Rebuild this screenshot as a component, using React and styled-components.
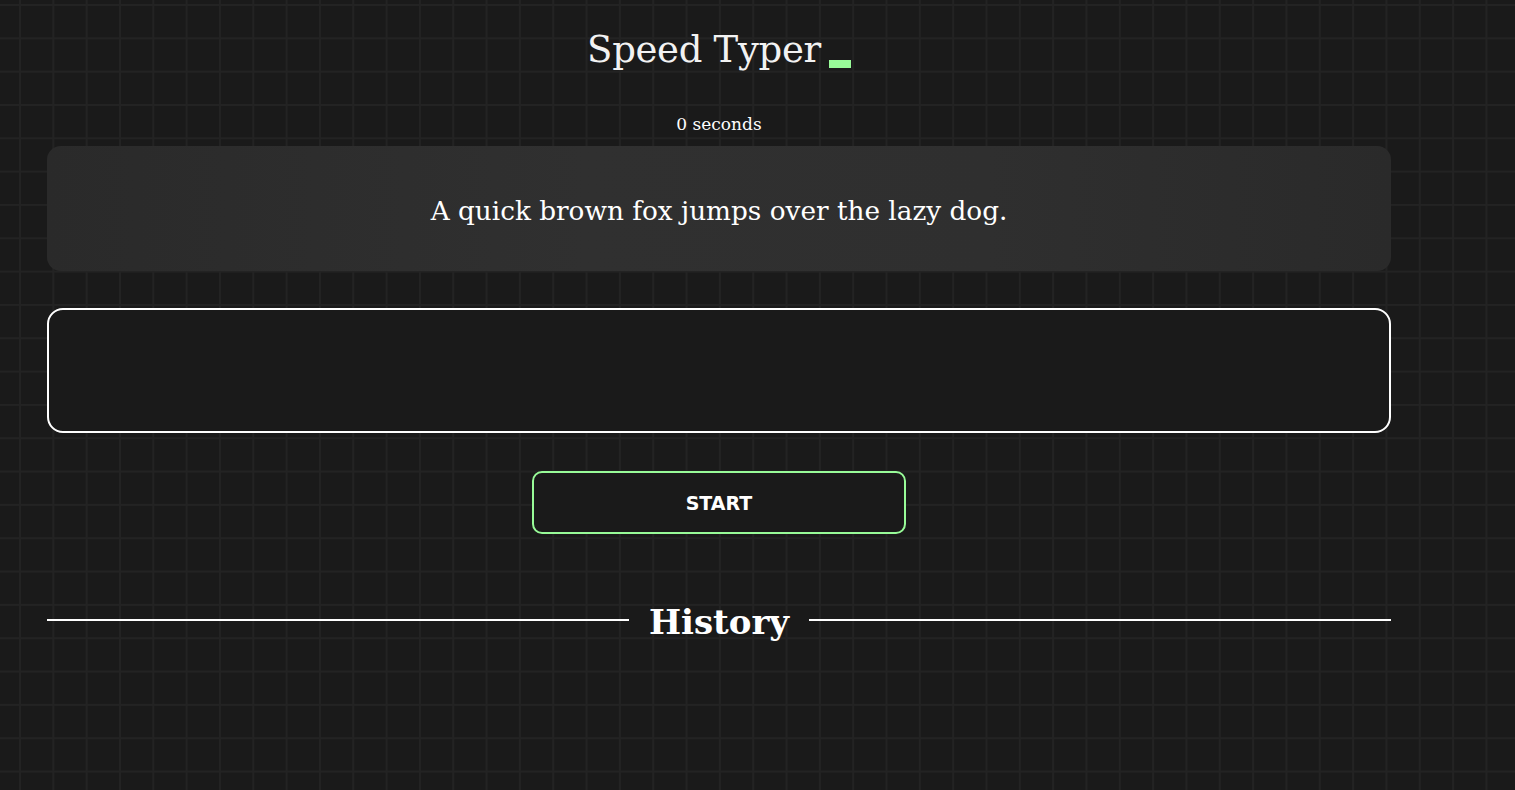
import styled, { createGlobalStyle } from "styled-components";

const GlobalStyle = createGlobalStyle`
  html, body {
    margin: 0;
    padding: 0;
  }

  body {
    min-height: 100vh;
    background-color: #1a1a1a;
    background-image:
      linear-gradient(to right, #232323 2px, transparent 2px),
      linear-gradient(to bottom, #232323 2px, transparent 2px);
    background-size: 33.333px 33.333px;
    background-position: 19px 4px;
    color: #ffffff;
    font-family: "DejaVu Serif", "Liberation Serif", serif;
  }
`;

const Page = styled.main`
  width: 1344px;
  margin-left: 47px;
  display: flex;
  flex-direction: column;
  align-items: center;
  padding-top: 24px;
`;

const Title = styled.h1`
  margin: 0;
  font-weight: 400;
  font-size: 37px;
  line-height: 52px;
  letter-spacing: -0.3px;
  color: #f2f2f2;
  display: flex;
  align-items: baseline;
  gap: 8px;
`;

// blinking-style block cursor next to the title
const Cursor = styled.span`
  display: inline-block;
  align-self: flex-end;
  width: 22px;
  height: 8px;
  margin-bottom: 8px;
  background: #98fb98;
`;

const Timer = styled.p`
  margin: 38px 0 12px;
  font-size: 17px;
  line-height: 20px;
`;

const Quote = styled.div`
  width: 100%;
  height: 125px;
  box-sizing: border-box;
  border-radius: 14px;
  background: linear-gradient(to right, #2a2a2a, #303030 40%, #2f2f2f 70%, #2a2a2a);
  display: flex;
  align-items: center;
  justify-content: center;
  padding-top: 4px;
  font-size: 26.3px;
`;

const Input = styled.textarea`
  width: 100%;
  height: 125px;
  box-sizing: border-box;
  margin-top: 37px;
  border: 2px solid #ffffff;
  border-radius: 16px;
  background: #1a1a1a;
  color: #ffffff;
  resize: none;
  outline: none;
  padding: 16px;
  font-family: inherit;
  font-size: 22px;
`;

const StartButton = styled.button`
  margin-top: 38px;
  width: 374px;
  height: 63px;
  border: 2px solid #98fb98;
  border-radius: 10px;
  background: #1a1a1a;
  color: #ffffff;
  font-family: "DejaVu Sans", Verdana, sans-serif;
  font-weight: 700;
  font-size: 19px;
  cursor: pointer;
`;

const Divider = styled.div`
  width: 100%;
  margin-top: 62px;
  display: flex;
  align-items: center;
  gap: 20px;

  &::before,
  &::after {
    content: "";
    flex: 1;
    height: 2px;
    background: #ffffff;
  }
`;

const DividerTitle = styled.h2`
  margin: 0;
  padding-top: 4px;
  font-size: 34px;
  font-weight: 700;
  line-height: 44px;
`;

export default function App() {
  return (
    <>
      <GlobalStyle />
      <Page>
        <Title>
          Speed Typer
          <Cursor />
        </Title>
        <Timer>0 seconds</Timer>
        <Quote>A quick brown fox jumps over the lazy dog.</Quote>
        <Input />
        <StartButton>START</StartButton>
        <Divider>
          <DividerTitle>History</DividerTitle>
        </Divider>
      </Page>
    </>
  );
}
